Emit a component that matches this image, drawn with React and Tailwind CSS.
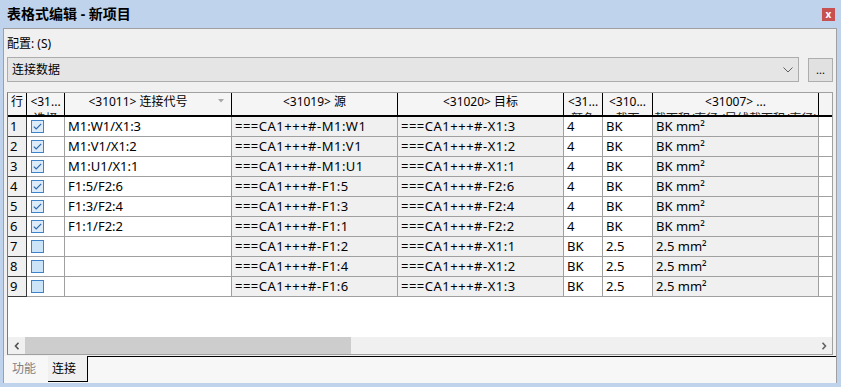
import React from "react";

const colW = ["w-[19px]", "w-[38px]", "w-[167px]", "w-[166px]", "w-[166px]", "w-[39px]", "w-[50px]", "w-[166px]"];
const colBg = ["bg-[#f0f0f0]", "bg-white", "bg-white", "bg-[#f0f0f0]", "bg-[#f0f0f0]", "bg-white", "bg-white", "bg-[#f0f0f0]"];
const colPad = ["", "", "", "pr-[10px]", "", "", "", ""];
const colTrack = ["", "", "", "tracking-[0.5px]", "tracking-[0.5px]", "", "", ""];

const headers = [
  ["行"],
  ["<31...", "选择"],
  ["<31011> 连接代号"],
  ["<31019> 源"],
  ["<31020> 目标"],
  ["<31...", "颜色"],
  ["<310...", "截面"],
  ["<31007> ...", "截面积/直径 (导线截面积/直径)"],
];

const rows = [
  [true, "M1:W1/X1:3", "===CA1+++#-M1:W1", "===CA1+++#-X1:3", "4", "BK", "BK mm²"],
  [true, "M1:V1/X1:2", "===CA1+++#-M1:V1", "===CA1+++#-X1:2", "4", "BK", "BK mm²"],
  [true, "M1:U1/X1:1", "===CA1+++#-M1:U1", "===CA1+++#-X1:1", "4", "BK", "BK mm²"],
  [true, "F1:5/F2:6", "===CA1+++#-F1:5", "===CA1+++#-F2:6", "4", "BK", "BK mm²"],
  [true, "F1:3/F2:4", "===CA1+++#-F1:3", "===CA1+++#-F2:4", "4", "BK", "BK mm²"],
  [true, "F1:1/F2:2", "===CA1+++#-F1:1", "===CA1+++#-F2:2", "4", "BK", "BK mm²"],
  [false, "", "===CA1+++#-F1:2", "===CA1+++#-X1:1", "BK", "2.5", "2.5 mm²"],
  [false, "", "===CA1+++#-F1:4", "===CA1+++#-X1:2", "BK", "2.5", "2.5 mm²"],
  [false, "", "===CA1+++#-F1:6", "===CA1+++#-X1:3", "BK", "2.5", "2.5 mm²"],
];

function Check({ on }) {
  return (
    <svg width="13" height="13" viewBox="0 0 13 13">
      <rect x="0.5" y="0.5" width="12" height="12" fill={on ? "#deecf9" : "#cce4f7"} stroke="#3f83c6" />
      {on && <polyline points="2.8,6.6 5.2,9 10.2,3.8" fill="none" stroke="#2a68ad" strokeWidth="1.2" />}
    </svg>
  );
}

export default function App() {
  return (
    <div className="w-[841px] h-[387px] bg-[#bfd4ec] flex flex-col text-black font-['Noto_Sans','Noto_Sans_CJK_SC',sans-serif] overflow-hidden">
      {/* title bar */}
      <div className="h-[28px] flex items-center justify-between pl-[7px] pr-[6px] shrink-0">
        <span className="text-[14px] font-bold leading-none">表格式编辑 - 新项目</span>
        <div className="w-[13px] h-[13px] bg-[#c75050] text-white text-[10px] font-bold leading-none flex items-center justify-center">x</div>
      </div>

      {/* panel */}
      <div className="ml-[3px] w-[834px] h-[355px] border-t border-l border-r border-[#a0a0a0] bg-[#f0f0f0] flex flex-col shrink-0">
        <div className="pl-[3px] pt-[7px] text-[12px] leading-[16px]">配置: (S)</div>

        <div className="flex pl-[3px] mt-[5px] shrink-0">
          <div className="w-[792px] h-[25px] bg-[#e5e5e5] border border-[#acacac] flex items-center justify-between pl-[4px] pr-[4px]">
            <span className="text-[12px] leading-none">连接数据</span>
            <svg width="10" height="6" viewBox="0 0 10 6" className="mr-[1px]">
              <polyline points="0.5,0.5 5,5 9.5,0.5" fill="none" stroke="#606060" strokeWidth="1" />
            </svg>
          </div>
          <div className="ml-[9px] mt-[1px] w-[25px] h-[24px] bg-[#e1e1e1] border border-[#adadad] flex items-center justify-center text-[11px] leading-none pb-[2px]">...</div>
        </div>

        {/* grid */}
        <div className="ml-[3px] mt-[10px] w-[826px] h-[263px] border-t border-r border-b border-[#a0a0a0] border-l border-l-[#7a7a7a] bg-white flex flex-col shrink-0">
          <div className="flex h-[24px] shrink-0 overflow-hidden">
            {headers.map((h, i) => (
              <div
                key={i}
                className={`${colW[i]} ${i === 2 ? "pr-[20px]" : ""} shrink-0 h-full border-r border-b-2 border-black bg-[#f5f5f5] overflow-hidden text-center text-[12px] leading-[16px] pt-[1px] whitespace-nowrap relative`}
              >
                <div>{h[0]}</div>
                {h[1] && <div className="leading-[17px] text-[#222]">{h[1]}</div>}
                {i === 2 && (
                  <svg width="6" height="4" viewBox="0 0 6 4" className="absolute right-[7px] top-[6px]">
                    <polygon points="0,0 6,0 3,3.5" fill="#a8a8a8" />
                  </svg>
                )}
              </div>
            ))}
            <div className="flex-1 h-full border-b-2 border-black bg-[#f5f5f5]" />
          </div>

          {rows.map((r, ri) => (
            <div key={ri} className="flex h-[20px] shrink-0 text-[13px]">
              <div className={`${colW[0]} ${colBg[0]} shrink-0 h-full border-r border-b border-[#3a3a3a] pl-[2px] flex items-center`}>
                {ri + 1}
              </div>
              <div className={`${colW[1]} ${colBg[1]} shrink-0 h-full border-r border-b border-[#a0a0a0] pl-[4px] flex items-center`}>
                <Check on={r[0]} />
              </div>
              {r.slice(1).map((v, ci) => (
                <div
                  key={ci}
                  className={`${colW[ci + 2]} ${colBg[ci + 2]} ${colTrack[ci + 2]} shrink-0 h-full border-r border-b border-[#a0a0a0] pl-[3px] flex items-center whitespace-nowrap overflow-hidden`}
                >
                  {v}
                </div>
              ))}
              <div className="flex-1 h-full border-b border-[#a0a0a0] bg-white" />
            </div>
          ))}

          <div className="flex-1" />

          {/* horizontal scrollbar */}
          <div className="h-[17px] bg-[#f0f0f0] flex items-stretch shrink-0">
            <div className="w-[17px] flex items-center justify-center">
              <svg width="6" height="8" viewBox="0 0 6 8">
                <polyline points="4.5,0.8 1.5,4 4.5,7.2" fill="none" stroke="#505050" strokeWidth="1.6" />
              </svg>
            </div>
            <div className="w-[326px] bg-[#cdcdcd]" />
            <div className="flex-1" />
            <div className="w-[17px] flex items-center justify-center">
              <svg width="6" height="8" viewBox="0 0 6 8">
                <polyline points="1.5,0.8 4.5,4 1.5,7.2" fill="none" stroke="#606060" strokeWidth="1.6" />
              </svg>
            </div>
          </div>
        </div>

        {/* tabs */}
        <div className="mt-[1px] flex-1 flex bg-[#f7f7f7] text-[12px]">
          <div className="w-[44px] h-[26px] flex items-center pl-[8px] text-[#808080]">功能</div>
          <div className="w-[40px] h-[26px] flex items-center pl-[4px] bg-[#f0f0f0] border-r border-b border-black">连接</div>
          <div className="flex-1 h-[26px] border-t border-black" />
        </div>
      </div>
    </div>
  );
}
